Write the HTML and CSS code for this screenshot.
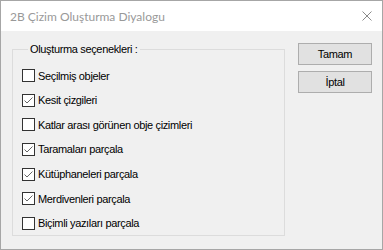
FILE: index.html
```html
<!DOCTYPE html>
<html lang="tr">
<head>
    <meta charset="UTF-8">
    <title>2B Çizim Oluşturma Diyalogu</title>
    <link rel="stylesheet" href="styles.css">
</head>
<body>
    <div class="window">
        <div class="titlebar">
            <span class="title">2B Çizim Oluşturma Diyalogu</span>
            <svg class="close" width="10" height="10" viewBox="0 0 10 10">
                <path d="M0.5 0.5 L9.5 9.5 M9.5 0.5 L0.5 9.5" stroke="#8a8a8a" stroke-width="1" fill="none"/>
            </svg>
        </div>

        <div class="content">
            <fieldset class="group">
                <legend>Oluşturma seçenekleri :</legend>
                <div class="options">
                    <label class="option"><span class="box"></span>Seçilmiş objeler</label>
                    <label class="option"><span class="box checked"></span>Kesit çizgileri</label>
                    <label class="option"><span class="box"></span>Katlar arası görünen obje çizimleri</label>
                    <label class="option"><span class="box checked"></span>Taramaları parçala</label>
                    <label class="option"><span class="box checked"></span>Kütüphaneleri parçala</label>
                    <label class="option"><span class="box checked"></span>Merdivenleri parçala</label>
                    <label class="option"><span class="box"></span>Biçimli yazıları parçala</label>
                </div>
            </fieldset>

            <div class="buttons">
                <button class="button">Tamam</button>
                <button class="button">İptal</button>
            </div>
        </div>
    </div>
</body>
</html>
```

FILE: styles.css
```css
* {
    margin: 0;
    padding: 0;
    box-sizing: border-box;
}

body {
    font-family: "Liberation Sans", Arial, sans-serif;
    font-size: 11px;
    letter-spacing: -0.35px;
    color: #000;
    background: #fff;
}

.window {
    width: 383px;
    height: 250px;
    border: 1px solid #a6a6a6;
    background: #f0f0f0;
    display: flex;
    flex-direction: column;
}

.titlebar {
    height: 30px;
    background: #fff;
    display: flex;
    align-items: center;
    justify-content: space-between;
    padding: 0 10px 0 9px;
}

.title {
    font-family: Lato, "Noto Sans", sans-serif;
    font-size: 12px;
    letter-spacing: 0;
    color: #999;
}

.content {
    flex: 1;
    display: flex;
    align-items: flex-start;
    padding: 12px 0 0 11px;
}

.group {
    width: 273px;
    height: 193px;
    border: 1px solid #dcdcdc;
    padding: 0 0 0 9px;
}

.group legend {
    margin-left: 6px;
    padding: 0 2px;
    line-height: 13px;
}

.options {
    display: flex;
    flex-direction: column;
    gap: 11.67px;
    padding-top: 13px;
}

.option {
    display: flex;
    align-items: center;
    gap: 3px;
    height: 13px;
}

.box {
    width: 13px;
    height: 13px;
    border: 1px solid #333;
    background: #fff;
    flex: none;
}

.box.checked {
    background: #fff url("data:image/svg+xml,%3Csvg xmlns='http://www.w3.org/2000/svg' width='11' height='11'%3E%3Cpath d='M1.5 5.5 L4 8 L9.5 2.5' stroke='%23666' stroke-width='1' fill='none'/%3E%3C/svg%3E") no-repeat center;
}

.buttons {
    display: flex;
    flex-direction: column;
    gap: 6px;
    margin: 0 0 0 13px;
}

.button {
    width: 74px;
    height: 22px;
    border: 1px solid #adadad;
    background: #e1e1e1;
    font-family: inherit;
    font-size: 11px;
    letter-spacing: inherit;
    color: #000;
}
```
